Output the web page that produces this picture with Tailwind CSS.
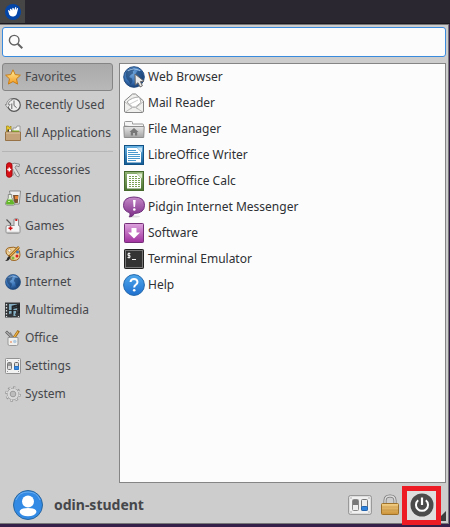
<!DOCTYPE html>
<html lang="en">
<head>
<meta charset="utf-8">
<meta name="viewport" content="width=device-width, initial-scale=1">
<title>Whisker Menu</title>
<script src="https://cdn.jsdelivr.net/npm/@tailwindcss/browser@4"></script>
</head>
<body class="flex min-h-screen flex-col bg-[#35204a] font-['Noto_Sans',sans-serif] text-[12px] leading-4 text-[#45474b]">
<svg class="absolute size-0" aria-hidden="true">
  <defs>
    <linearGradient id="star" x2="0" y2="1"><stop stop-color="#fff0a0"/><stop offset="1" stop-color="#f59a1c"/></linearGradient>
    <radialGradient id="globe" cx=".4" cy=".3" r=".75"><stop stop-color="#75a9dc"/><stop offset=".55" stop-color="#3a74b8"/><stop offset="1" stop-color="#153a6e"/></radialGradient>
    <linearGradient id="blue" x2="0" y2="1"><stop stop-color="#4fa8ec"/><stop offset="1" stop-color="#1f70cf"/></linearGradient>
    <linearGradient id="writer" x2="0" y2="1"><stop stop-color="#69b4e4"/><stop offset="1" stop-color="#125c97"/></linearGradient>
    <linearGradient id="calc" x2="0" y2="1"><stop stop-color="#93b577"/><stop offset="1" stop-color="#4b7230"/></linearGradient>
    <linearGradient id="violet" x2="0" y2="1"><stop stop-color="#c58ac8"/><stop offset="1" stop-color="#7c2b87"/></linearGradient>
    <linearGradient id="soft" x2="0" y2="1"><stop stop-color="#dda4de"/><stop offset="1" stop-color="#a1309f"/></linearGradient>
    <linearGradient id="grey" x2="0" y2="1"><stop stop-color="#e6e6e6"/><stop offset="1" stop-color="#a3a3a3"/></linearGradient>
    <linearGradient id="gold" x2="0" y2="1"><stop stop-color="#f3cf85"/><stop offset="1" stop-color="#cb9339"/></linearGradient>
    <symbol id="earth" viewBox="0 0 16 16">
      <circle cx="8" cy="8" r="7.500" fill="url(#globe)" stroke="#20497d" stroke-width=".7"/>
      <path d="M2 4.500 4 2.300 6.500 1.500 8.500 2.500 7 4 7.500 5.300 5.500 6.500 4.500 8 6.500 9 7 11 5.500 13.500 4.300 11 2.800 9.500 2 7.500ZM9.500 5 11 3l2.500.8L15 7l-.8 3.500L12 13l-1.500-2-.3-2.500L8.800 7Z" fill="#173c6b" opacity=".6"/>
      <path d="M3.500 3.500Q8 .8 12.500 3.500" stroke="#b9d6f2" stroke-width=".8" fill="none" opacity=".7"/>
    </symbol>
    <symbol id="switches" viewBox="0 0 24 20">
      <rect x=".7" y=".7" width="22.600" height="18.600" rx="1.500" fill="#f1f1f1" stroke="#8b8b8b"/>
      <g fill="#777"><rect x="2.500" y="2.500" width="1" height="1"/><rect x="20.500" y="2.500" width="1" height="1"/><rect x="2.500" y="16.500" width="1" height="1"/><rect x="20.500" y="16.500" width="1" height="1"/></g>
      <rect x="4.500" y="4.500" width="6" height="11" rx="1" fill="#eee" stroke="#888"/><rect x="5" y="5" width="5" height="5" fill="#777"/>
      <rect x="13.500" y="4.500" width="6" height="11" rx="1" fill="#eee" stroke="#777"/><rect x="13.500" y="11.500" width="6" height="4" rx="1" fill="#2f83dd" stroke="#1f62af"/>
    </symbol>
  </defs>
</svg>

<header class="flex h-6 shrink-0 border-b border-[#1c1a20] bg-[#2a2730]">
  <button aria-label="Applications menu" class="flex w-[25px] items-center justify-center bg-[#464646]">
    <svg class="size-4" viewBox="0 0 16 16"><circle cx="8" cy="8" r="8" fill="#0446a8"/><path d="M3 6.600Q3.300 5.600 4.300 6.400L5.300 7.200 4.800 5.200Q5.200 4.300 6.200 5.100L7.200 6.500 7.300 4.200Q8 3.300 8.700 4.300L9.200 6 10.200 3.200Q11.100 2.500 11.300 3.600L11 5.900 12.200 4Q13.300 3.700 13 5L12.100 8.500Q11.600 12 8.600 12.400 5.600 13 4.300 10.800Z" fill="#fff"/></svg>
  </button>
</header>

<main class="mr-px mb-[3px] flex grow flex-col border-t border-r border-b border-[#777] bg-[#cdcdcd] pt-0.5">
  <label class="mr-0.5 ml-0.5 flex h-[30px] items-center gap-2 rounded-[3px] border border-[#3a8ade] bg-[#fcfcfc] pl-[5px]">
    <svg class="size-4 shrink-0" viewBox="0 0 16 16" fill="none" stroke="#626262"><circle cx="6.200" cy="6.200" r="4.800" stroke-width="1.400"/><path d="m9.700 9.700 4.600 4.600" stroke-width="2"/></svg>
    <input type="search" aria-label="Search applications" class="h-full min-w-0 grow bg-transparent outline-none">
  </label>

  <div class="mt-1.5 flex grow gap-1.5 pr-0.5 pl-0.5">
    <nav aria-label="Categories" class="flex w-[111px] shrink-0 flex-col">
      <button class="flex h-7 items-center gap-1 rounded-[3px] border border-[#858585] bg-linear-to-b from-[#aaa] to-[#b8b8b8] pb-px pl-0.5 whitespace-nowrap">
        <svg class="size-4 shrink-0" viewBox="0 0 16 16"><path d="m8 .8 2.200 4.800 5.200.6-3.900 3.600 1.100 5.300L8 12.500l-4.600 2.600 1.100-5.300L.6 6.200l5.200-.6Z" fill="url(#star)" stroke="#c97e17" stroke-linejoin="round"/></svg>Favorites</button>
      <button class="flex h-7 items-center gap-1 pb-px pl-[3px] whitespace-nowrap">
        <svg class="size-4 shrink-0" viewBox="0 0 16 16"><circle cx="9" cy="8" r="6.300" fill="#eee" stroke="#555" stroke-width="1.200"/><path d="M9 3.500v5l2.600 2.200M6.800 12V6.500" fill="none" stroke="#666"/><path d="M7 3.200Q3.500 4 3.300 7.500H5.200L2.600 10.800 0 7.500H1.500Q1.800 3 6.300 1.500Z" fill="#ddd" stroke="#777" stroke-width=".7"/></svg>Recently Used</button>
      <button class="flex h-7 items-center gap-1 pb-px pl-[3px] whitespace-nowrap">
        <svg class="size-4 shrink-0" viewBox="0 0 16 16"><path d="M1.500 7V1h2l1 1.500L6 1v6Z" fill="#e5c52a" stroke="#9b8311" stroke-width=".7"/><path d="M8 3h3l1-2h3v6H8Z" fill="#f3f3f3" stroke="#8c8c8c" stroke-width=".8"/><path d="M2.500 4.500h4V8h-4Z" fill="#333"/><path d="M4 4.500h2V8H4Z" fill="#fff"/><path d="M7 5.500h7V8H7Z" fill="#79b91d"/><path d="M.5 7h15v8.500H.5Z" fill="#c3a279" stroke="#967246"/><path d="M1 8h14" stroke="#e0c9a7"/></svg>All Applications</button>
      <hr class="mt-1 mb-1 border-t border-[#b5b5b5]">
      <button class="flex h-7 items-center gap-1 pb-px pl-[3px] whitespace-nowrap">
        <svg class="size-4 shrink-0" viewBox="0 0 16 16"><path d="m6.500 2 3-.8 5 1-.4 2.500-3-1-1 1.800L14.500 13l-1 2-2-1-4-7" fill="#ddd" stroke="#777" stroke-width=".8"/><path d="M8 7 5.500 12l2 2 2.500-4" fill="#bbb" stroke="#888" stroke-width=".7"/><rect x="1.500" y=".7" width="5.500" height="14.600" rx="2.700" fill="#d91016" stroke="#a20a0e"/><path d="M4.250 5.500v4M2.300 7.500h3.900" stroke="#fff" stroke-width="1.400"/></svg>Accessories</button>
      <button class="flex h-7 items-center gap-1 pb-px pl-[3px] whitespace-nowrap">
        <svg class="size-4 shrink-0" viewBox="0 0 16 16"><path d="M4.500 1h11l-1.300 13H7Z" fill="#eee" stroke="#777" stroke-width=".8"/><path d="M8 5h5.500l-.7 8H9Z" fill="#7c5430"/><path d="M10 6h3v3h-3Z" fill="#e98434"/><path d="M3.300 4.500h3.400v3l3 5.300q.7 2.200-1.300 2.400H2Q0 15 .7 12.800L3.300 8Z" fill="#e8f5dd" stroke="#777" stroke-width=".8"/><path d="m2.600 9.500-1.500 3.300q-.4 1.500 1 1.700h6q1.500-.2 1-1.700L7.300 9.500Z" fill="#64b62a"/><path d="M3 11.500h2" stroke="#c3ef99"/></svg>Education</button>
      <button class="flex h-7 items-center gap-1 pb-px pl-[3px] whitespace-nowrap">
        <svg class="size-4 shrink-0" viewBox="0 0 16 16"><path d="m1.500 1.500 4 4v2" fill="none" stroke="#555" stroke-width="1.200"/><rect x="9" y=".8" width="4.500" height="8" rx="1" fill="#f2f2f2" stroke="#888"/><path d="M10.300 1h2v2h-2Z" fill="#d31c1c"/><rect x="1" y="7.500" width="14" height="7.800" rx="1.500" fill="#f5f5f5" stroke="#909090"/><path d="M9.600 6.500h3.400v2H9.600Z" fill="#f5f5f5"/><path d="M5.500 8.300v4M3.500 10.300h4" stroke="#cf1515" stroke-width="1.500"/><path d="M1 14.300h14" stroke="#aaa"/></svg>Games</button>
      <button class="flex h-7 items-center gap-1 pb-px pl-[3px] whitespace-nowrap">
        <svg class="size-4 shrink-0" viewBox="0 0 16 16"><path d="M1 6Q.5 2 5 1.500q4-1 7 .8 3.500 2 3 6.700-.5 5.500-6 5.500-4 .3-4-2.500Q5 10 3 9.300 1.200 8.500 1 6Z" fill="#edcf98" stroke="#9c6723"/><circle cx="4.500" cy="4.500" r="1.500" fill="#fff" stroke="#9c6723" stroke-width=".5"/><circle cx="12.500" cy="6" r="1.500" fill="#3d79bd"/><circle cx="12" cy="10" r="1.500" fill="#d52222"/><circle cx="8" cy="12" r="1.500" fill="#7fb83a"/><path d="M14 1 4 11" stroke="#764b16" stroke-width="2.500"/><path d="M14 1 5 10" stroke="#f1b34c" stroke-width="1.200"/><path d="M5.300 11.500Q4 15.500 0 15q2-1 2.500-3.500l1.500-1Z" fill="#292929"/></svg>Graphics</button>
      <button class="flex h-7 items-center gap-1 pb-px pl-[3px] whitespace-nowrap">
        <svg class="size-4 shrink-0"><use href="#earth"/></svg>Internet</button>
      <button class="flex h-7 items-center gap-1 pb-px pl-[3px] whitespace-nowrap">
        <svg class="size-4 shrink-0" viewBox="0 0 16 16"><rect width="15" height="15" y=".5" fill="#34383b"/><path d="M4 2h8v6H4Zm0 7h7v5H4Z" fill="#85adc1"/><path d="M1.500 2v13M13.500 2v13" stroke="#ddd" stroke-width="1.300" stroke-dasharray="1.500 1.500"/><path d="M7.500 13V4.500L14 3v8.500" fill="none" stroke="#202326" stroke-width="1.800"/><path d="M8 6.300 14 5" stroke="#202326" stroke-width="1.500"/><ellipse cx="6" cy="13.300" rx="2.300" ry="1.900" fill="#34383c"/><ellipse cx="12.500" cy="12.300" rx="2.300" ry="1.900" fill="#34383c"/></svg>Multimedia</button>
      <button class="flex h-7 items-center gap-1 pb-px pl-[3px] whitespace-nowrap">
        <svg class="size-4 shrink-0" viewBox="0 0 16 16"><path d="m1 1.500 7 7" stroke="#666" stroke-width="2.800"/><path d="m1.500 2 6 6" stroke="#ddd"/><path d="M5 2.500 9 9" stroke="#888" stroke-width="1.500"/><path d="M13.700.8 8.500 8.500" stroke="#a36c16" stroke-width="2.800"/><path d="M13 1.500 9 7.500" stroke="#f1b749" stroke-width="1.200"/><path d="M3 7.500h10V14q0 1.500-1.500 1.500h-7Q3 15.500 3 14Z" fill="#f0f0ee" stroke="#999"/><path d="M5 11h2v2H5Z" fill="#edb69b"/><circle cx="9.800" cy="11.500" r="1.700" fill="#b0cbe2"/></svg>Office</button>
      <button class="flex h-7 items-center gap-1 pb-px pl-[3px] whitespace-nowrap">
        <svg class="size-4 shrink-0" viewBox="0 0 16 16"><rect x=".5" y=".5" width="15" height="15" rx=".8" fill="#f2f2f2" stroke="#929292"/><path d="M2 2h1v1H2Zm11 0h1v1h-1ZM2 13h1v1H2Zm11 0h1v1h-1Z" fill="#999"/><rect x="2.500" y="4.500" width="4" height="7" rx="1" fill="#ddd" stroke="#777"/><path d="M3 5h3v3H3Z" fill="#999"/><rect x="9.500" y="4.500" width="4" height="7" rx="1" fill="#ddd" stroke="#666"/><path d="M9.500 8.500h4v3h-4Z" fill="#3689df" stroke="#2872c4"/></svg>Settings</button>
      <button class="flex h-7 items-center gap-1 pb-px pl-[3px] whitespace-nowrap">
        <svg class="size-4 shrink-0" viewBox="0 0 16 16"><circle cx="8" cy="8" r="6.600" fill="none" stroke="#949494" stroke-width="2.400" stroke-dasharray="2.600 2.584"/><circle cx="8" cy="8" r="5.800" fill="#d9d9d9" stroke="#999" stroke-width=".7"/><circle cx="8" cy="8" r="6.400" fill="none" stroke="#dedede" stroke-width="1.600" stroke-dasharray="1.500 3.526" stroke-dashoffset="-.5"/><circle cx="8" cy="8" r="2.800" fill="#c4c4c4" stroke="#999"/><circle cx="8" cy="8" r="1" fill="#eee" stroke="#888" stroke-width=".5"/></svg>System</button>
    </nav>

    <ul class="grow border border-[#858585] bg-[#fcfcfc] pl-[3px] text-[#2e3034]">
      <li><button class="flex h-[26px] w-full items-center gap-[3px]"><svg class="size-[22px]" viewBox="0 0 22 22"><use href="#earth" width="22" height="22"/><path d="m12 8 .3 11 2.700-2.300 2 4.300 2.400-1.200-2-4.200 3.600-.4Z" fill="#e9e9e9" stroke="#666"/></svg>Web Browser</button></li>
      <li><button class="flex h-[26px] w-full items-center gap-[3px]"><svg class="size-[22px]" viewBox="0 0 22 22"><path d="m1.500 9 8-7h3l8 7v10q0 1.500-1.500 1.500H3q-1.500 0-1.500-1.500Z" fill="#f0f0ee" stroke="#858585"/><path d="M4 10Q9 5 16.500 5L18 10.500 12.500 15h-3Z" fill="#fff" stroke="#aaa"/><path d="m2 10 7 5.500L2.500 20m17.500-10-7 5.500 6.500 4.500M7 17l2.500-1.500h3L15 17" fill="none" stroke="#bbb"/><path d="m7 12 8-4" stroke="#ccc"/></svg>Mail Reader</button></li>
      <li><button class="flex h-[26px] w-full items-center gap-[3px]"><svg class="size-[22px]" viewBox="0 0 22 22"><path d="M1.500 8V4.500q0-1 1-1h6q1 0 1 1V6h10q1 0 1 1v3Z" fill="#f5f5f5" stroke="#999"/><path d="M.8 8.500h20.400l-.5 11H1.300Z" fill="url(#grey)" stroke="#8d8d8d"/><path d="m11 10 4.500 4h-1.300v3.500H12V15h-2v2.500H7.800V14H6.500Z" fill="#777"/></svg>File Manager</button></li>
      <li><button class="flex h-[26px] w-full items-center gap-[3px]"><svg class="size-[22px]" viewBox="0 0 22 22"><rect x="1.500" y="1.500" width="19" height="19" fill="url(#writer)" stroke="#125184"/><path d="M4 4h10l4 4v10.500H4Z" fill="#fff"/><path d="M14 3.500h5v5Z" fill="#c9e4f6"/><path d="M5 6.500h8m-8 2h10m-10 2h12m-12 2h12m-12 2h12m-12 2h8" stroke="#4a9ad0"/></svg>LibreOffice Writer</button></li>
      <li><button class="flex h-[26px] w-full items-center gap-[3px]"><svg class="size-[22px]" viewBox="0 0 22 22"><rect x="1.500" y="1.500" width="19" height="19" fill="url(#calc)" stroke="#456a2b"/><path d="M4 4h10l4 4v10.500H4Z" fill="#fff"/><path d="M14 3.500h5v5Z" fill="#e1edcf"/><path d="M6 6.500h8m-8 2h11m-11 2h11m-11 2h11m-11 2h11m-11 2h11" stroke="#7ca257" stroke-dasharray="2 1"/></svg>LibreOffice Calc</button></li>
      <li><button class="flex h-[26px] w-full items-center gap-[3px]"><svg class="size-[22px]" viewBox="0 0 22 22"><ellipse cx="11" cy="20.500" rx="6" ry="1" fill="#ddd"/><path d="M11 1q10.500 0 10.500 8.300 0 7.700-10 8.200-2 3.500-5 3.500 1-2 .3-4.200Q.5 15 .5 9.300.5 1 11 1Z" fill="url(#violet)" stroke="#71317d"/><path d="M10 4h2.700L12 11h-1.400Z" fill="#fff"/><circle cx="11.300" cy="13.500" r="1.300" fill="#fff"/></svg>Pidgin Internet Messenger</button></li>
      <li><button class="flex h-[26px] w-full items-center gap-[3px]"><svg class="size-[22px]" viewBox="0 0 22 22"><rect x="1.500" y="1.500" width="19" height="19" rx=".8" fill="url(#soft)" stroke="#742d77"/><path d="M8.500 6h5v4.500H17L11 16.500 5 10.500h3.500Z" fill="#fff"/></svg>Software</button></li>
      <li><button class="flex h-[26px] w-full items-center gap-[3px]"><svg class="size-[22px]" viewBox="0 0 22 22"><rect x="1.500" y="1.500" width="19" height="19" rx=".8" fill="#333" stroke="#202020"/><rect x="2.500" y="2.500" width="17" height="17" fill="none" stroke="#777"/><path d="M7.300 5.500H5v2h2v2H4.500M6 4.500v6M9 11.500h4" fill="none" stroke="#eee"/></svg>Terminal Emulator</button></li>
      <li><button class="flex h-[26px] w-full items-center gap-[3px]"><svg class="size-[22px]" viewBox="0 0 22 22"><circle cx="11" cy="11" r="10.400" fill="url(#blue)" stroke="#2368ac"/><path d="M7.500 8Q7.800 5 11 5t3.500 3q0 1.500-1.800 2.800-1.500 1-1.500 2.700" fill="none" stroke="#fff" stroke-width="2"/><circle cx="11.200" cy="16.300" r="1.300" fill="#fff"/></svg>Help</button></li>
    </ul>
  </div>

  <footer class="relative flex h-10 shrink-0 items-center pt-1 pl-3">
    <button class="flex items-center gap-2.5 text-[14px] font-bold"><svg class="size-8" viewBox="0 0 32 32"><circle cx="16" cy="16" r="14.500" fill="#338ae5" stroke="#28669f"/><path d="M4 11Q7 3 16 3t12 8" fill="none" stroke="#69adef"/><circle cx="16" cy="12.500" r="6" fill="#fff"/><path d="M7.500 23q0-4 8.500-4t8.500 4q-2 4.300-8.500 4.300T7.500 23Z" fill="#fff"/></svg>odin-student</button>
    <div class="mr-[7px] ml-auto flex items-center gap-2">
      <button aria-label="All settings"><svg class="h-5 w-6"><use href="#switches"/></svg></button>
      <button aria-label="Lock screen"><svg class="h-[22px] w-5" viewBox="0 0 20 22"><path d="M5 10V6.500Q5 2 10 2t5 4.500V10" fill="none" stroke="#777" stroke-width="3"/><path d="M5 10V6.500Q5 2 10 2t5 4.500V10" fill="none" stroke="#ddd" stroke-width="1.400"/><rect x="1.500" y="9.500" width="17" height="11" rx="1" fill="url(#gold)" stroke="#9e712b"/><path d="M2 13h16M2 16h16" stroke="#b98842" opacity=".45"/></svg></button>
      <button aria-label="Log out" class="relative z-10 -my-4 -ml-1.5 flex size-[39px] items-center justify-center border-[5px] border-[#ed1c24] bg-[#dedede]"><svg class="size-6" viewBox="0 0 24 24"><circle cx="12" cy="12" r="11.500" fill="#4b4b4b"/><path d="M8.200 7.200a6 6 0 1 0 7.600 0" fill="none" stroke="#fff" stroke-width="2"/><path d="M12 4.500V12" stroke="#fff" stroke-width="2.200"/></svg></button>
    </div>
    <svg class="absolute right-0.5 bottom-0.5 size-2.5" viewBox="0 0 10 10"><path d="M10 0v10H0Z" fill="#3d3d3d"/></svg>
  </footer>
</main>
</body>
</html>
